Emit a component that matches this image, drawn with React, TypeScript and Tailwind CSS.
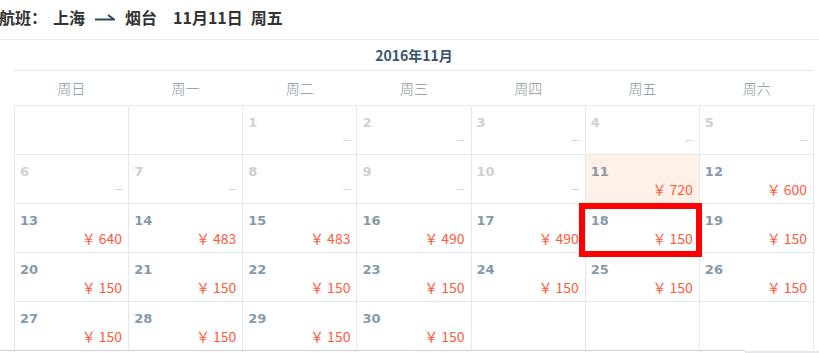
import React from "react";

type Day = {
  day?: number;
  price?: number;
  disabled?: boolean;
  today?: boolean;
  selected?: boolean;
};

const weekdays = ["周日", "周一", "周二", "周三", "周四", "周五", "周六"];

const prices: Record<number, number> = {
  11: 720,
  12: 600,
  13: 640,
  14: 483,
  15: 483,
  16: 490,
  17: 490,
};

// November 2016 starts on a Tuesday
const buildDays = (): Day[] => {
  const days: Day[] = [{}, {}];
  for (let d = 1; d <= 30; d++) {
    days.push({
      day: d,
      disabled: d < 11,
      price: d < 11 ? undefined : prices[d] ?? 150,
      today: d === 11,
      selected: d === 18,
    });
  }
  while (days.length < 35) days.push({});
  return days;
};

const cjk = "font-['Noto_Sans_CJK_SC',sans-serif]";

const Cell = ({ item, lastRow }: { item: Day; lastRow: boolean }) => {
  return (
    <div
      className={`relative flex flex-col justify-between border-l border-[#e3e8ef] ${
        lastRow ? "h-[48px]" : "h-[49px] border-b"
      } ${item.today ? "bg-[#fff0e8]" : "bg-white"}`}
    >
      {item.selected && (
        <div className="absolute left-[-7px] top-[-1px] z-10 h-[54px] w-[123px] border-[6px] border-[#ff0000]" />
      )}
      {item.day !== undefined && (
        <>
          <span
            className={`pl-[5px] pt-[9px] font-['DejaVu_Sans',sans-serif] text-[13px] font-bold leading-[15px] ${
              item.disabled ? "text-[#d0d0d0]" : "text-[#8699ab]"
            }`}
          >
            {item.day}
          </span>
          {item.disabled ? (
            <span className="self-end pb-[6px] pr-[6px] font-['Liberation_Sans',sans-serif] text-[13px] leading-[16px] text-[#d2d2d2]">
              –
            </span>
          ) : (
            <span
              className={`self-end flex pb-[4px] pr-[6px] ${cjk} text-[14px] leading-[20px] text-[#ff5a3c]`}
            >
              <span className="mr-[3px]">￥</span>
              {item.price}
            </span>
          )}
        </>
      )}
    </div>
  );
};

export default function App() {
  const days = buildDays();

  return (
    <div className={`w-[819px] h-[353px] overflow-hidden bg-white ${cjk}`}>
      {/* Flight title */}
      <div className="h-[40px] border-b border-[#e6e9ee]">
        <div className="flex items-center h-[34px] text-[16px] font-bold text-[#333333]">
          <span className="ml-[-1px]">航班：</span>
          <span className="ml-[6px]">上海</span>
          <svg
            className="ml-[10px]"
            width="20"
            height="8"
            viewBox="0 0 20 8"
            fill="none"
          >
            <path
              d="M0 6.5 H19 L13 2"
              stroke="#2e4862"
              strokeWidth="2"
            />
          </svg>
          <span className="ml-[10px]">烟台</span>
          <span className="ml-[16px]">11月11日</span>
          <span className="ml-[8px]">周五</span>
        </div>
      </div>

      <div className="ml-[14px] w-[800px]">
        {/* Month */}
        <div className="h-[31px] border-b border-[#e3e8ef] text-center text-[14px] font-bold leading-[30px] text-[#3a5470]">
          2016年11月
        </div>

        {/* Weekdays */}
        <div className="grid grid-cols-7 h-[34px]">
          {weekdays.map((w) => (
            <div
              key={w}
              className="flex items-center justify-center text-[14px] font-light text-[#7f92a3]"
            >
              {w}
            </div>
          ))}
        </div>

        {/* Days */}
        <div className="grid grid-cols-7 border-t border-r border-[#e3e8ef]">
          {days.map((item, i) => (
            <Cell key={i} item={item} lastRow={i >= 28} />
          ))}
        </div>
      </div>

      {/* Bottom scroll edge */}
      <div className="flex h-[3px]">
        <div className="w-[745px] h-px bg-[#c8cfd6]" />
        <div className="flex-1 mt-px h-[2px] bg-[#e4e8ee]" />
      </div>
    </div>
  );
}
